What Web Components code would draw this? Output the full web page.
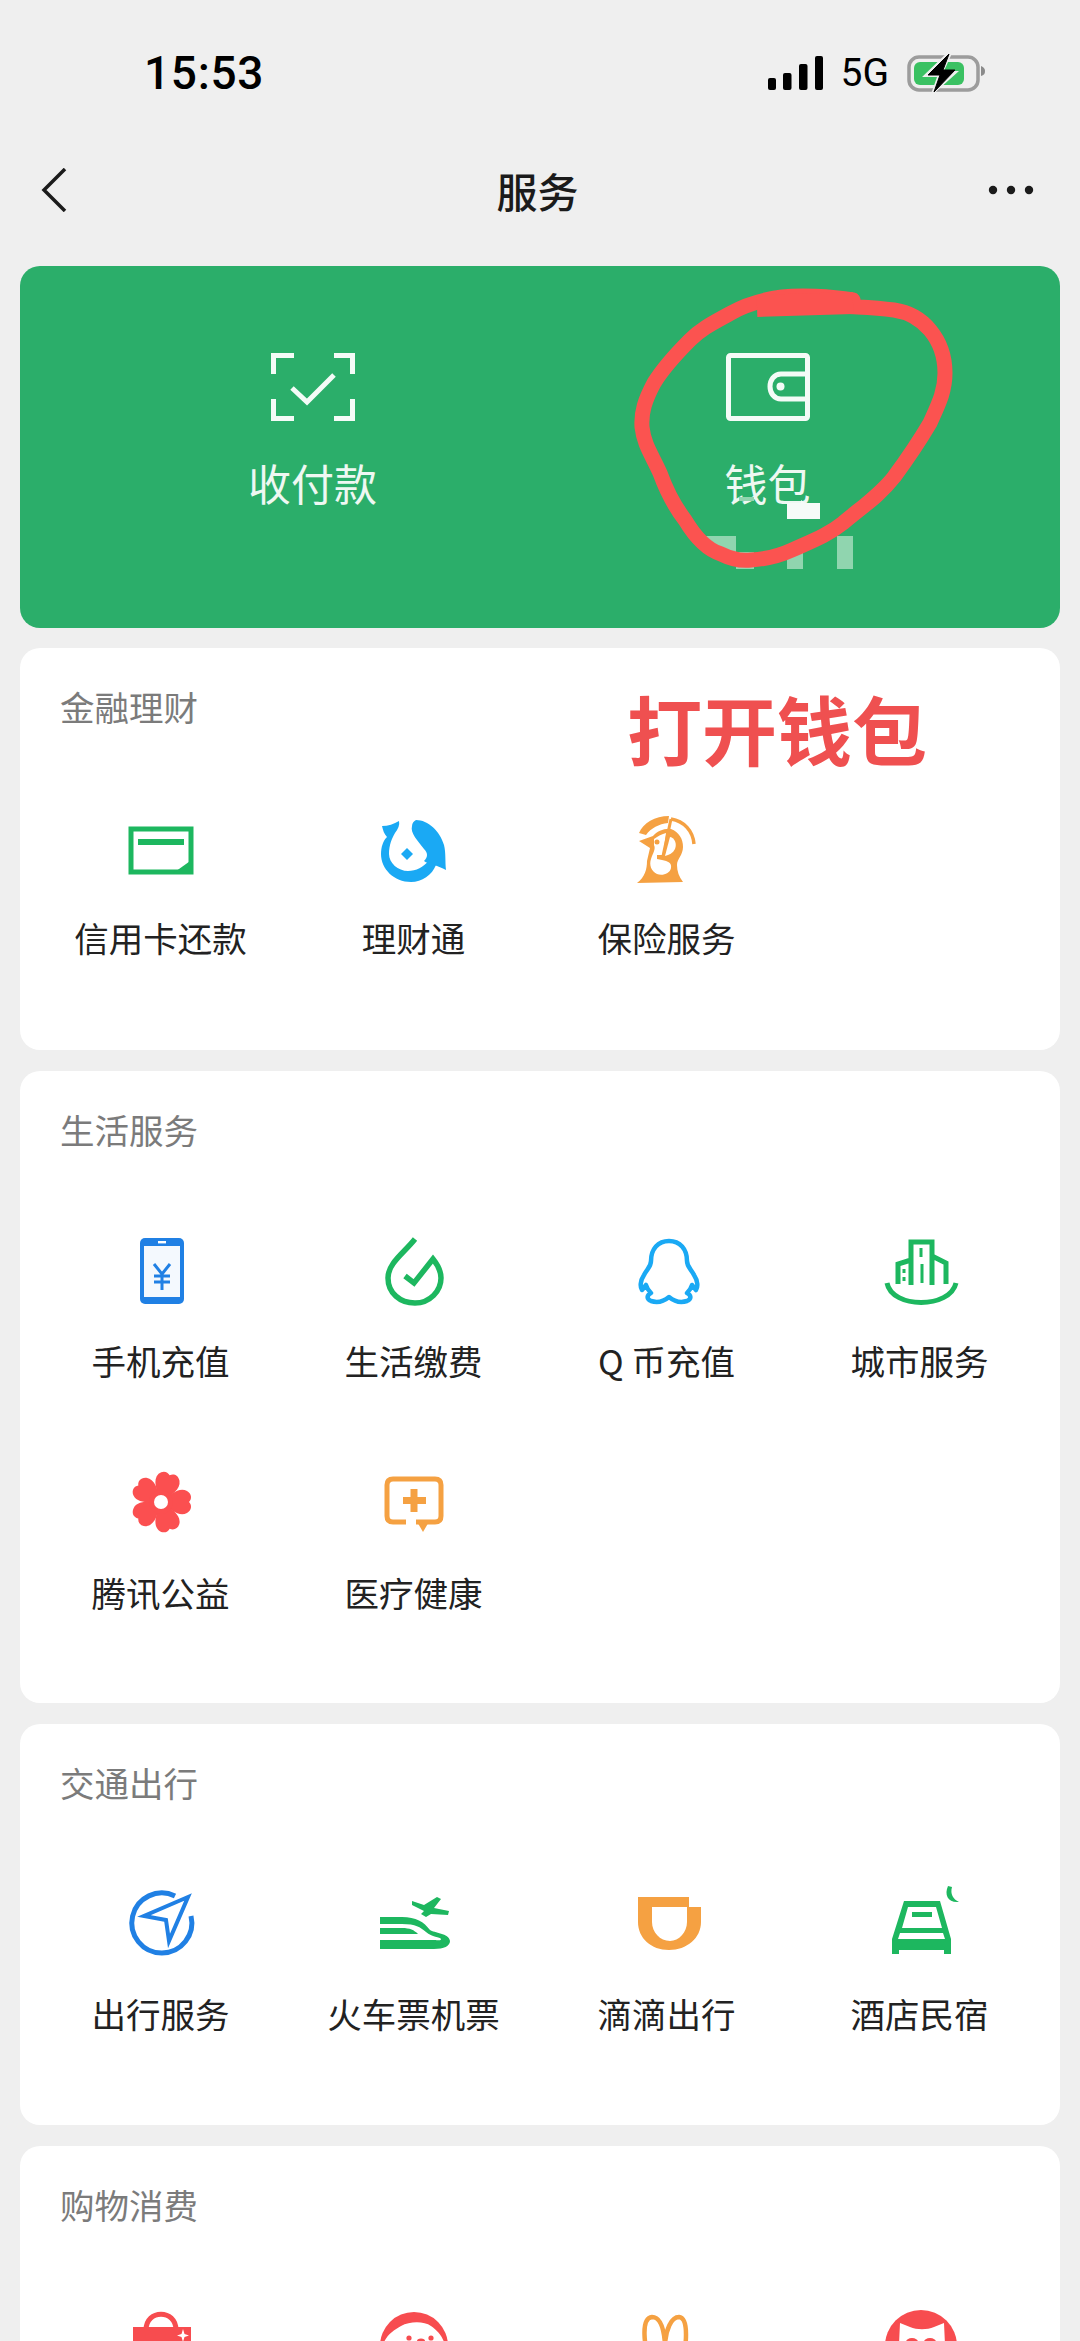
<!doctype html>
<html lang="zh">
<head>
<meta charset="utf-8">
<title>服务</title>
<style>
  html, body { margin: 0; background: #efefef; }
  body { width: 1080px; height: 2341px; overflow: hidden; font-family: "Noto Sans CJK SC", "Noto Sans", sans-serif; }
</style>
</head>
<body>
<service-page>
  <status-bar></status-bar>
  <nav-bar>服务</nav-bar>
  <wallet-banner></wallet-banner>
  <service-card style="--pb:50px;--dy:3px">
    <span slot="title">金融理财</span>
    <service-item icon="card">信用卡还款</service-item>
    <service-item icon="fish">理财通</service-item>
    <service-item icon="shield">保险服务</service-item>
  </service-card>
  <service-card style="--pb:48px;--dy:0px">
    <span slot="title">生活服务</span>
    <service-item icon="phone">手机充值</service-item>
    <service-item icon="drop">生活缴费</service-item>
    <service-item icon="qq">Q 币充值</service-item>
    <service-item icon="city">城市服务</service-item>
    <service-item icon="flower">腾讯公益</service-item>
    <service-item icon="health">医疗健康</service-item>
  </service-card>
  <service-card style="--pb:49px;--dy:2px">
    <span slot="title">交通出行</span>
    <service-item icon="compass">出行服务</service-item>
    <service-item icon="train">火车票机票</service-item>
    <service-item icon="didi">滴滴出行</service-item>
    <service-item icon="hotel">酒店民宿</service-item>
  </service-card>
  <service-card style="--pb:48px;--dy:0px">
    <span slot="title">购物消费</span>
    <service-item icon="bag"></service-item>
    <service-item icon="dog"></service-item>
    <service-item icon="roo"></service-item>
    <service-item icon="cat"></service-item>
  </service-card>
  <wallet-mark></wallet-mark>
</service-page>

<script>
  const BLUE = '#2080e4', SKY = '#1aa9f4', GREEN = '#1db75f', ORANGE = '#f5a142', RED = '#f74c4f';

  const PETAL = 'M0 0C-8 -10 -15 -18 -11 -26C-8 -31 -3 -31 0 -28C3 -31 8 -31 11 -26C15 -18 8 -10 0 0Z';

  // every icon is drawn in an 80x80 box
  const ICONS = {
    card: `<path d="M10 18H70V61H10Z" fill="none" stroke="${GREEN}" stroke-width="5"/>
      <path d="M17 28H63V34H17Z" fill="${GREEN}"/>
      <path d="M72 48V63H51Z" fill="${GREEN}"/>`,
    fish: `<g fill="${SKY}">
      <path d="M42 9C54 9 66 20 70 34C72 42 71 50 72 59C68 57 64 55 60 54C56 52 52 52 50 50C54 46 54 42 50 38C44 30 36 22 38 15C38 12 40 10 42 9Z"/>
      <path d="M8 15C14 15 20 13 25 10C26 14 24 18 21 22C18 27 15 34 15 43C15 52 24 60 34 60C42 60 50 56 54 50L62 54C58 64 48 71 37 71C20 71 7 58 7 43C7 36 9 30 13 26C10 23 9 19 8 15Z"/>
      <path d="M33 37L39 43L33 49L27 43Z"/></g>`,
    shield: `<path d="M44 8C57 10 66 20 67 33" fill="none" stroke="${ORANGE}" stroke-width="3.5"/>
      <path d="M12 22C16 12 28 5 42 5L41 12C32 13 24 17 19 24Z" fill="${ORANGE}"/>
      <path d="M10 72C18 66 20 58 20 50L23 37L12 30L26 25C30 20 38 17 44 18C52 21 56 28 56 36C56 44 50 48 50 54C50 60 52 66 56 71Z" fill="${ORANGE}"/>
      <path d="M27 28C31 25 35 23 39 22L36 44H30V48L35 49C41 50 45 52 44 57C43 63 35 65 30 63C24 60 22 54 24 48C26 42 29 38 27 34Z" fill="#fff"/>
      <path d="M43 26C48 27 50 33 48 38C46 42 42 44 38 45Z" fill="#fff"/>
      <path d="M44 8L36 45" stroke="${ORANGE}" stroke-width="3"/>
      <circle cx="30" cy="31" r="2.5" fill="${ORANGE}"/>`,
    phone: `<rect x="19" y="7" width="44" height="66" rx="5" fill="${BLUE}"/>
      <rect x="23" y="15" width="36" height="51" fill="#f4f9fe"/>
      <rect x="37" y="10" width="8" height="2.4" fill="#fff"/>
      <path d="M33 33L41 43L49 33M41 43V59M33 45H49M33 51H49" fill="none" stroke="${BLUE}" stroke-width="3"/>`,
    drop: `<path d="M41 8C30 22 14 32 14 47C14 62 26 72 41 72C56 72 67 60 67 47C67 40 63 33 59 28L40 52L31 45" fill="none" stroke="${GREEN}" stroke-width="5.5"/>`,
    qq: `<path d="M42 10C31 10 24 18 24 30C24 36 20 38 17 44C13 50 13 56 15 59L19 54C20 58 22 60 24 62C20 64 19 68 24 70C30 72 36 71 42 66C48 71 54 72 60 70C65 68 64 64 60 62C62 60 64 58 65 54L69 59C71 56 71 50 67 44C64 38 60 36 60 30C60 18 53 10 42 10Z" fill="none" stroke="${SKY}" stroke-width="4.5" stroke-linejoin="round"/>`,
    city: `<path d="M7 52C12 78 70 78 76 52" fill="none" stroke="${GREEN}" stroke-width="5"/>
      <path d="M31 54V11H52V54M52 25L66 32V53M31 29L18 33V53" fill="none" stroke="${GREEN}" stroke-width="5"/>
      <path d="M41 17V26M24 38V42M24 46V50M42 33V52" stroke="${GREEN}" stroke-width="3"/>`,
    flower: `<g transform="translate(40 39)" fill="#fb4f50">
      <path transform="rotate(18)" d="${PETAL}"/>
      <path transform="rotate(90)" d="${PETAL}"/>
      <path transform="rotate(162)" d="${PETAL}"/>
      <path transform="rotate(234)" d="${PETAL}"/>
      <path transform="rotate(306)" d="${PETAL}"/>
      <circle r="12"/><circle r="7" fill="#fff"/></g>`,
    health: `<path d="M32 59H19C15 59 13 57 13 53V22C13 18 15 16 19 16H61C65 16 67 18 67 22V53C67 57 65 59 61 59H42" fill="none" stroke="${ORANGE}" stroke-width="5"/>
      <path d="M42 57H56L49 69Z" fill="${ORANGE}"/>
      <path d="M40 26V49M29 37.500H52" stroke="${ORANGE}" stroke-width="7"/>`,
    compass: `<path d="M54 10A30 30 0 1 0 70 30" fill="none" stroke="${BLUE}" stroke-width="5"/>
      <path d="M67 11L23 30L45 34L48 55Z" fill="#fff" stroke="${BLUE}" stroke-width="4" stroke-linejoin="miter"/>`,
    train: `<g fill="${GREEN}">
      <path d="M38 15L50 19L63 11L67 13L60 22L75 25L74 29L57 28L52 31L47 28L50 25L38 19Z"/>
      <path d="M6 31H28C42 31 50 36 56 44C60 47 75 47 76 55C76 60 70 63 60 63H6V54H60C64 54 67 55 67 53C66 51 58 51 52 46C46 41 42 38 28 38H6Z"/>
      <path d="M6 42H28C36 42 40 44 44 48H6Z"/></g>`,
    didi: `<path fill-rule="evenodd" fill="${ORANGE}" d="M11 11H62V21H74V36C74 52 60 64 42 64C24 64 11 52 11 36ZM25 21V36C25 46 33 55 43 55C52 55 60 46 60 36V21Z"/>`,
    hotel: `<g fill="${GREEN}">
      <path d="M68 0C64 9 68 17 79 16C73 13 70 8 72 1Z"/>
      <path d="M24 15H60L71 53V68H64V64H19V68H12V53ZM28 21L22 42H62L56 21ZM20 47L18 53H65L63 47Z" fill-rule="evenodd"/>
      <path d="M32 26H52V31H32Z"/></g>`,
    bag: `<path d="M25 24C25 3 55 3 55 24" fill="none" stroke="${RED}" stroke-width="5"/>
      <rect x="12" y="21" width="58" height="60" fill="${RED}"/>
      <path d="M62 23L63.500 28L68 29.500L63.500 31L62 36L60.500 31L56 29.500L60.500 28Z" fill="#fff"/>`,
    dog: `<circle cx="40" cy="40" r="34" fill="${RED}"/>
      <path d="M10 36C14 28 20 24 27 20C36 15 50 15 57 20C63 24 68 30 70 36V60H10Z" fill="#fff"/>
      <circle cx="35" cy="32" r="2.600" fill="${RED}"/><circle cx="57" cy="32" r="2.600" fill="${RED}"/>
      <ellipse cx="47" cy="35" rx="4" ry="2.500" fill="${RED}"/>`,
    roo: `<path d="M25 60C16 40 14 12 25 11C34 11 37 24 38 38C39 24 44 11 52 11C62 12 60 40 54 60" fill="none" stroke="${ORANGE}" stroke-width="4.500"/>`,
    cat: `<circle cx="41" cy="40" r="36" fill="${RED}"/>
      <path d="M20 17L30 21C37 24 47 24 54 21L64 17L66 60H18Z" fill="#fff"/>
      <ellipse cx="32" cy="36" rx="6" ry="4" fill="${RED}"/><ellipse cx="50" cy="36" rx="6" ry="4" fill="${RED}"/>`
  };

  class ServicePage extends HTMLElement {
    constructor() {
      super();
      this.attachShadow({mode: 'open'}).innerHTML = `
        <style>
          :host { display: flex; flex-direction: column; position: relative; width: 1080px; height: 2341px; overflow: hidden; background: #efefef; }
        </style>
        <slot></slot>`;
    }
  }

  class StatusBar extends HTMLElement {
    constructor() {
      super();
      this.attachShadow({mode: 'open'}).innerHTML = `
        <style>
          :host { display: flex; align-items: center; justify-content: space-between; height: 146px; padding: 0 94px 0 144px; flex: none; color: #000; font-family: Roboto, "Liberation Sans", sans-serif; }
          .time { font-size: 46px; font-weight: 500; letter-spacing: .7px; }
          .right { display: flex; align-items: center; gap: 18px; }
          .net { font-size: 39px; line-height: 40px; }
          svg { display: block; }
        </style>
        <span class="time">15:53</span>
        <div class="right">
          <svg width="55" height="34" viewBox="0 0 55 34" fill="#000">
            <rect x="0" y="22" width="8" height="12" rx="2"/>
            <rect x="15" y="17" width="8.500" height="17" rx="2"/>
            <rect x="31" y="8" width="8.500" height="26" rx="2"/>
            <rect x="47" y="0" width="8" height="34" rx="2"/>
          </svg>
          <span class="net">5G</span>
          <svg width="79" height="40" viewBox="0 0 79 40">
            <rect x="2" y="4" width="69" height="33" rx="10" fill="none" stroke="#9c9c9c" stroke-width="3.500"/>
            <rect x="7" y="9" width="50" height="23" rx="6" fill="#3ac162"/>
            <path d="M74 13C77 14 78 16 78 18C78 21 77 22 74 23Z" fill="#8a8a8a"/>
            <path d="M42 -2L15 24H30L23 44L52 18H37L46 -2Z" fill="#efefef"/>
            <path d="M42 1L21 22H33L27 39L48 17H36Z" fill="#000" stroke="#000"/>
          </svg>
        </div>`;
    }
  }

  class NavBar extends HTMLElement {
    constructor() {
      super();
      this.attachShadow({mode: 'open'}).innerHTML = `
        <style>
          :host { display: grid; grid-template-columns: 1fr auto 1fr; align-items: center; height: 88px; padding: 0 46px 0 41px; margin-bottom: 32px; flex: none; color: #1b1b1b; }
          .title { font-size: 41px; line-height: 88px; font-weight: 500; }
          .more { justify-self: end; }
          svg { display: block; }
        </style>
        <svg width="26" height="44" viewBox="0 0 26 44"><path d="M24 1L3 22L24 43" fill="none" stroke="#1b1b1b" stroke-width="3.500"/></svg>
        <span class="title"><slot></slot></span>
        <svg class="more" width="46" height="10" viewBox="0 0 46 10" fill="#1b1b1b"><circle cx="5" cy="5" r="4.200"/><circle cx="23" cy="5" r="4.200"/><circle cx="41" cy="5" r="4.200"/></svg>`;
    }
  }

  class WalletBanner extends HTMLElement {
    constructor() {
      super();
      this.attachShadow({mode: 'open'}).innerHTML = `
        <style>
          :host { display: grid; grid-template-columns: 1fr 1fr; box-sizing: border-box; height: 362px; margin: 0 20px 20px; padding: 87px 65px 0; border-radius: 20px; background: #2bae6a; color: #eef8f2; flex: none; }
          .cell { display: flex; flex-direction: column; align-items: center; }
          .cell span { margin-top: 36px; font-size: 43px; line-height: 50px; }
          svg { display: block; }
        </style>
        <div class="cell">
          <svg width="84" height="68" viewBox="0 0 84 68" fill="none" stroke="#f4fbf7" stroke-width="5">
            <path d="M2.500 21V2.500H23M63 2.500H81.500V21M2.500 46V65.500H23M63 65.500H81.500V46"/>
            <path d="M21 35L36 49L63 22"/>
          </svg>
          <span>收付款</span>
        </div>
        <div class="cell">
          <svg width="84" height="68" viewBox="0 0 84 68" fill="none" stroke="#f4fbf7" stroke-width="5">
            <rect x="2.500" y="2.500" width="79" height="63" rx="2"/>
            <path d="M81 21H55C48 21 44 27 44 33.500C44 40 48 46 55 46H81"/>
            <circle cx="54.500" cy="33.500" r="4" fill="#f4fbf7" stroke="none"/>
          </svg>
          <span>钱包</span>
        </div>`;
    }
  }

  class ServiceCard extends HTMLElement {
    constructor() {
      super();
      this.attachShadow({mode: 'open'}).innerHTML = `
        <style>
          :host { display: block; margin: 0 20px 21px; padding: 38px 14px var(--pb, 50px); border-radius: 20px; background: #fff; flex: none; }
          .title { margin: 0 26px 42px; font-size: 34.500px; line-height: 40px; color: #7b7b7b; }
          .grid { display: grid; grid-template-columns: repeat(4, 1fr); }
        </style>
        <div class="title"><slot name="title"></slot></div>
        <div class="grid"><slot></slot></div>`;
    }
  }

  class ServiceItem extends HTMLElement {
    constructor() {
      super();
      this.attachShadow({mode: 'open'}).innerHTML = `
        <style>
          :host { display: flex; flex-direction: column; align-items: center; height: 232px; }
          svg { display: block; flex: none; margin: calc(40px + var(--dy, 0px)) 0 calc(27px - var(--dy, 0px)); }
          .label { font-size: 34.500px; line-height: 44px; color: #222; white-space: nowrap; }
        </style>
        <svg width="80" height="80" viewBox="0 0 80 80">${ICONS[this.getAttribute('icon')] || ''}</svg>
        <span class="label"><slot></slot></span>`;
    }
  }

  // the red pen marks and the leftovers of the screenshot, drawn over the page
  class WalletMark extends HTMLElement {
    constructor() {
      super();
      this.attachShadow({mode: 'open'}).innerHTML = `
        <style>
          :host { position: absolute; left: 0; top: 0; width: 1080px; height: 800px; pointer-events: none; }
          svg { position: absolute; left: 0; top: 0; }
          .note { position: absolute; left: 627px; top: 689px; font-size: 75px; line-height: 78px; font-weight: 700; color: #ef5050; white-space: nowrap; }
        </style>
        <svg width="1080" height="800" viewBox="0 0 1080 800">
          <g fill="#90d5af">
            <rect x="705" y="536" width="31" height="17"/>
            <rect x="736" y="552" width="18" height="17"/>
            <rect x="787" y="552" width="16" height="17"/>
            <rect x="837" y="536" width="16" height="33"/>
            <rect x="739" y="497" width="15" height="4"/>
          </g>
          <path d="M787 503H801V500L805 503H820V519H787Z" fill="#f6fbf8"/>
          <path d="M853 300C830 296 800 295 782 297C760 300 745 305 731 313C715 322 702 328 690 340C673 357 662 370 654 383C645 400 641 412 642 427C644 445 652 455 660 473C668 495 675 507 685 520C697 540 708 550 721 554C733 560 742 561 751 560C767 559 779 556 792 550C812 541 828 535 843 523C862 507 880 495 894 477C908 458 920 440 930 423C938 405 945 392 945 373C945 355 940 342 930 330C920 318 908 312 894 310C870 307 850 306 807 305" fill="none" stroke="#fb5350" stroke-width="15" stroke-linecap="round"/>
          <path d="M757 306L853 303" fill="none" stroke="#fb5350" stroke-width="22"/>
        </svg>
        <span class="note">打开钱包</span>`;
    }
  }

  customElements.define('service-page', ServicePage);
  customElements.define('status-bar', StatusBar);
  customElements.define('nav-bar', NavBar);
  customElements.define('wallet-banner', WalletBanner);
  customElements.define('service-card', ServiceCard);
  customElements.define('service-item', ServiceItem);
  customElements.define('wallet-mark', WalletMark);
</script>
</body>
</html>
